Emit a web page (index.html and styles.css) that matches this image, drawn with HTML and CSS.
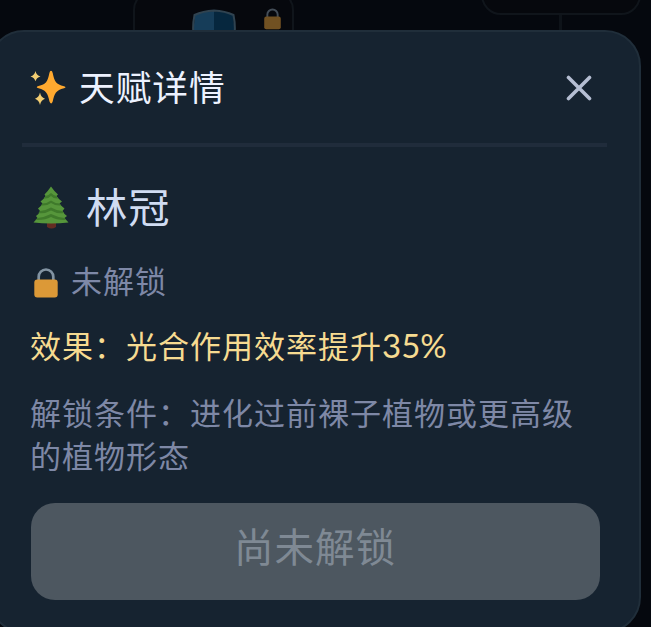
FILE: index.html
```html
<!DOCTYPE html>
<html lang="zh-CN">
<head>
<meta charset="utf-8">
<title>天赋详情</title>
<link rel="stylesheet" href="styles.css">
</head>
<body>
<svg class="defs" width="0" height="0">
  <symbol id="lock" viewBox="0 0 24 30">
    <path class="lock-bow" d="M4.7 14V8.800a7.300 7.300 0 0 1 14.600 0V14"/>
    <rect class="lock-body" x="0.3" y="11.6" width="23.4" height="18" rx="3"/>
  </symbol>
</svg>
<div class="tree-map">
  <div class="node node-shield">
    <svg class="shield" viewBox="0 0 44 50"><path class="shield-left" d="M22 2Q11 2 3 6Q1 18 2 30Q6 42 22 49Z"/><path class="shield-right" d="M22 2Q33 2 41 6Q43 18 42 30Q38 42 22 49Z"/><path class="shield-rim" d="M22 1.5Q11 2 2.5 6Q0 18 2 30Q6 42 22 49Q38 42 42 30Q44 18 41.5 6Q33 2 22 1.5Z"/></svg>
    <svg class="node-lock"><use href="#lock"/></svg>
  </div>
  <div class="node node-next"></div>
  <div class="link"></div>
</div>
<main class="dialog">
  <header class="header">
    <svg class="sparkles" viewBox="0 0 36 36">
      <path class="star-big" d="M21 .7Q22.2 .7 22.7 3C24.5 12 26 14.2 34 16.2Q37 17.2 34 18.2C26 20.4 24.5 23 22.7 31.5Q21.200 35.500 19.500 31.500C17.600 23 16 20.400 8.500 18.300Q5 17.200 8.500 16.100C16 14 17.600 12 19.400 3Q19.900 .7 21 .7Z"/>
      <path class="star-small" d="M5.500 1Q6.300 5.200 10.500 6.500Q6.300 7.800 5.500 11.300Q4.500 7.800 .5 6.500Q4.500 5.200 5.500 1ZM10 22.500Q10.900 27.300 15 28.700Q10.900 30.200 10 35Q9 30.200 5 28.700Q9 27.300 10 22.500Z"/>
    </svg>
    <h1 class="title">天赋详情</h1>
    <button class="close" aria-label="关闭"><svg viewBox="0 0 26 26"><path d="M2.500 2.500 23.500 23.500M23.500 2.500 2.500 23.500"/></svg></button>
  </header>
  <section class="content">
    <div class="talent">
      <svg class="pine" viewBox="0 0 36 44">
        <path class="trunk" d="M14 34h9v7q-4.500 3-9 0Z"/>
        <path class="leaf" d="M18 .5Q21 5 25 8.500L23.500 10Q25.500 13 29 15.500L26.500 17.500Q28.500 20.500 31.500 22.500L29.500 25Q31 28 34 30L31.500 32L35.500 36.500Q27 37.500 18 37.500Q9 37.500 .5 36.500L4.500 32L3 30Q6 28 7 25L5 22.500Q8 20.500 9.500 17.500L7.500 15.500Q11 13 12.500 10L11.500 8.500Q15 5 18 .5Z"/>
        <path class="leaf-shade" d="M12.500 10Q15.500 9.500 18 7Q20.500 9.500 23.500 10L25 12.500Q21 13 18 10Q15 13 11 12.500ZM9.500 17.500Q14 17.500 18 14.500Q22 17.500 26.500 17.500L28 19.500Q22.500 20 18 17Q14 20 8 19.500ZM7 25Q13 24.500 18 21.500Q23 24.500 29.500 25L31 27Q24 28 18 24.500Q12 28 5.500 27ZM4.500 32Q12 31 18 28Q24 31 31.500 32L33 34Q24 34.500 18 31Q12 34.500 2.500 34Z"/>
      </svg>
      <h2 class="name">林冠</h2>
    </div>
    <div class="status"><svg class="lock"><use href="#lock"/></svg><span>未解锁</span></div>
    <p class="effect">效果：光合作用效率提升<span class="amount">35%</span></p>
    <p class="condition">解锁条件：进化过前裸子植物或更高级的植物形态</p>
    <button class="unlock" disabled>尚未解锁</button>
  </section>
</main>
</body>
</html>
```

FILE: styles.css
```css
* { box-sizing: border-box; }
body {
  margin: 0;
  height: 627px;
  padding-top: 30px;
  overflow: hidden;
  position: relative;
  background: #05080e;
  font-family: "Noto Sans CJK SC", sans-serif;
}
h1, h2, p { margin: 0; font-weight: 400; }
svg { display: block; flex: none; }
button { border: 0; padding: 0; font: inherit; }
.defs { position: absolute; }
.lock-bow { fill: none; stroke: #8293a2; stroke-width: 2.7; }
.lock-body { fill: #dc9937; }

.tree-map { position: absolute; inset: 0; }
.node { position: absolute; border: 2px solid #10151b; border-radius: 20px; background: #06080d; }
.node-shield { left: 133px; top: -10px; width: 161px; height: 100px; }
.node-next { left: 481px; top: -80px; width: 160px; height: 95px; }
.link { position: absolute; left: 559px; top: 15px; width: 3px; height: 20px; background: #0e1319; }
.shield { position: absolute; left: 57px; top: 17px; width: 44px; height: 50px; }
.shield-left { fill: #163d59; }
.shield-right { fill: #06273e; }
.shield-rim { fill: none; stroke: #304350; stroke-width: 2; }
.node-lock { position: absolute; left: 129px; top: 16px; width: 17px; height: 22px; opacity: .5; }

.dialog {
  position: relative;
  width: 653px;
  height: 603px;
  margin-left: -12px;
  padding: 0 32px;
  border: 2px solid #202e3a;
  border-radius: 36px;
  background: #162330;
}
.header {
  display: flex;
  align-items: center;
  height: 115px;
  padding: 0 15px 0 8px;
  border-bottom: 4px solid #202c3b;
}
.sparkles { width: 36px; height: 36px; }
.star-big { fill: #ffa92f; }
.star-small { fill: #f2cd72; }
.title { margin-left: 13px; padding-bottom: 4px; color: #edf2ff; font-size: 35.7px; letter-spacing: 1px; line-height: 54px; }
.close { width: 26px; height: 26px; margin-left: auto; background: none; }
.close path { fill: none; stroke: #b5bed2; stroke-width: 3.6; stroke-linecap: round; }
.content { padding: 31px 7px 0 8px; }
.talent { display: flex; align-items: center; height: 60px; padding-left: 3px; }
.pine { width: 36px; height: 44px; }
.leaf { fill: #56963b; }
.leaf-shade { fill: #3f7a2b; }
.trunk { fill: #642c22; }
.name { margin-left: 17px; padding-bottom: 6px; color: #d0dcf2; font-size: 41.3px; letter-spacing: 1px; line-height: 60px; }
.status { display: flex; align-items: center; height: 44px; margin-top: 23px; padding-left: 4px; color: #7e88a7; font-size: 31px; letter-spacing: 1px; }
.lock { width: 24px; height: 30px; }
.status span { margin-left: 13px; padding-bottom: 8px; }
.effect { margin-top: 18px; color: #f6db91; font-size: 31px; letter-spacing: 1px; line-height: 44px; white-space: nowrap; }
.amount { font-family: Lato, sans-serif; font-size: 33px; letter-spacing: 0; line-height: 1; }
.condition { margin-top: 23px; color: #7e88a6; font-size: 31px; letter-spacing: 1px; line-height: 43px; }
.unlock {
  display: block;
  width: 569px;
  height: 97px;
  margin: 26.5px 0 0 .5px;
  padding-bottom: 13px;
  border-radius: 24px;
  background: #4d5760;
  color: #7f8994;
  font-size: 39.500px;
  letter-spacing: 1px;
}
```
